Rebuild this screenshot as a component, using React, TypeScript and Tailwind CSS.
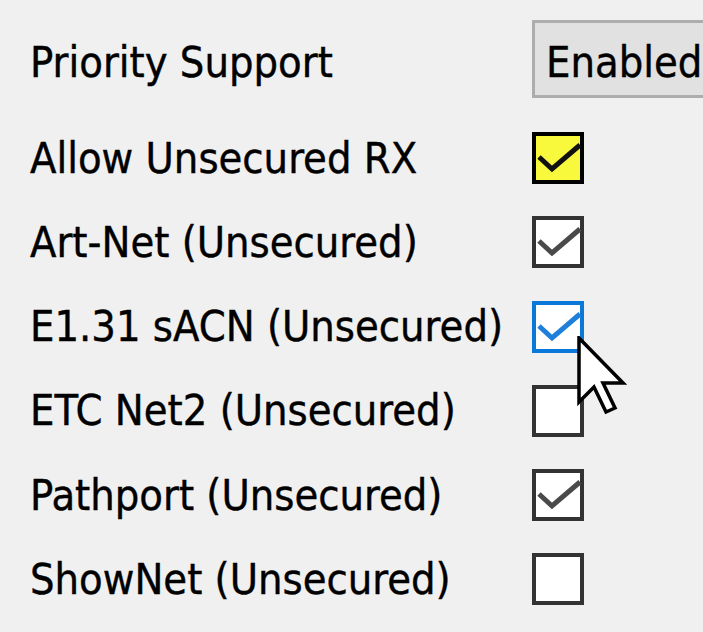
import React from "react";

type Kind = "yellow" | "gray" | "blue" | "empty";

function Check({ kind }: { kind: Kind }) {
  const box =
    kind === "yellow"
      ? "border-[4px] border-black bg-[#f8f83c]"
      : kind === "blue"
      ? "border-[4px] border-[#0a78d8] bg-white"
      : "border-[4px] border-[#333333] bg-white";
  const stroke = kind === "yellow" ? "#111111" : kind === "blue" ? "#1f80dc" : "#4a4a4a";
  return (
    <div className={`relative h-[52px] w-[52px] shrink-0 ${box}`}>
      {kind !== "empty" && (
        <svg className="absolute left-[-4px] top-[-4px]" width="52" height="52" viewBox="0 0 52 52">
          <polyline points="7,25 20,37 48,13" fill="none" stroke={stroke} strokeWidth="5" strokeLinejoin="miter" />
        </svg>
      )}
    </div>
  );
}

const rows: { label: string; kind: Kind }[] = [
  { label: "Allow Unsecured RX", kind: "yellow" },
  { label: "Art-Net (Unsecured)", kind: "gray" },
  { label: "E1.31 sACN (Unsecured)", kind: "blue" },
  { label: "ETC Net2 (Unsecured)", kind: "empty" },
  { label: "Pathport (Unsecured)", kind: "gray" },
  { label: "ShowNet (Unsecured)", kind: "empty" },
];

export default function App() {
  return (
    <div
      className="relative h-[632px] w-[703px] overflow-hidden bg-[#f0f0f0] text-black [-webkit-text-stroke:0.4px_black]"
      style={{ fontFamily: '"DejaVu Sans Condensed", "DejaVu Sans", sans-serif' }}
    >
      <div className="flex flex-col pl-[30px] pt-[20px]">
        <div className="flex h-[78px] items-center">
          <div className="w-[502px] shrink-0 pt-[7px] text-[43px] leading-none">Priority Support</div>
          <div className="flex h-[78px] w-[220px] shrink-0 items-center border-[3px] border-[#adadad] bg-[#e1e1e1] pl-[11px] pt-[6px] text-[43px] leading-none">
            Enabled
          </div>
        </div>
        <div className="mt-[34px] flex flex-col gap-[32.3px]">
          {rows.map((r) => (
            <div key={r.label} className="flex h-[52px] items-center">
              <div className="w-[502px] shrink-0 text-[43px] leading-none">{r.label}</div>
              <Check kind={r.kind} />
            </div>
          ))}
        </div>
      </div>
      <svg
        className="absolute left-[577px] top-[336px]"
        width="50"
        height="80"
        viewBox="0 0 50 80"
      >
        <polygon
          points="2,2 2,66 17,51 29,76 38,72 26,47 46,47"
          fill="white"
          stroke="black"
          strokeWidth="3.5"
          strokeLinejoin="miter"
        />
      </svg>
    </div>
  );
}
